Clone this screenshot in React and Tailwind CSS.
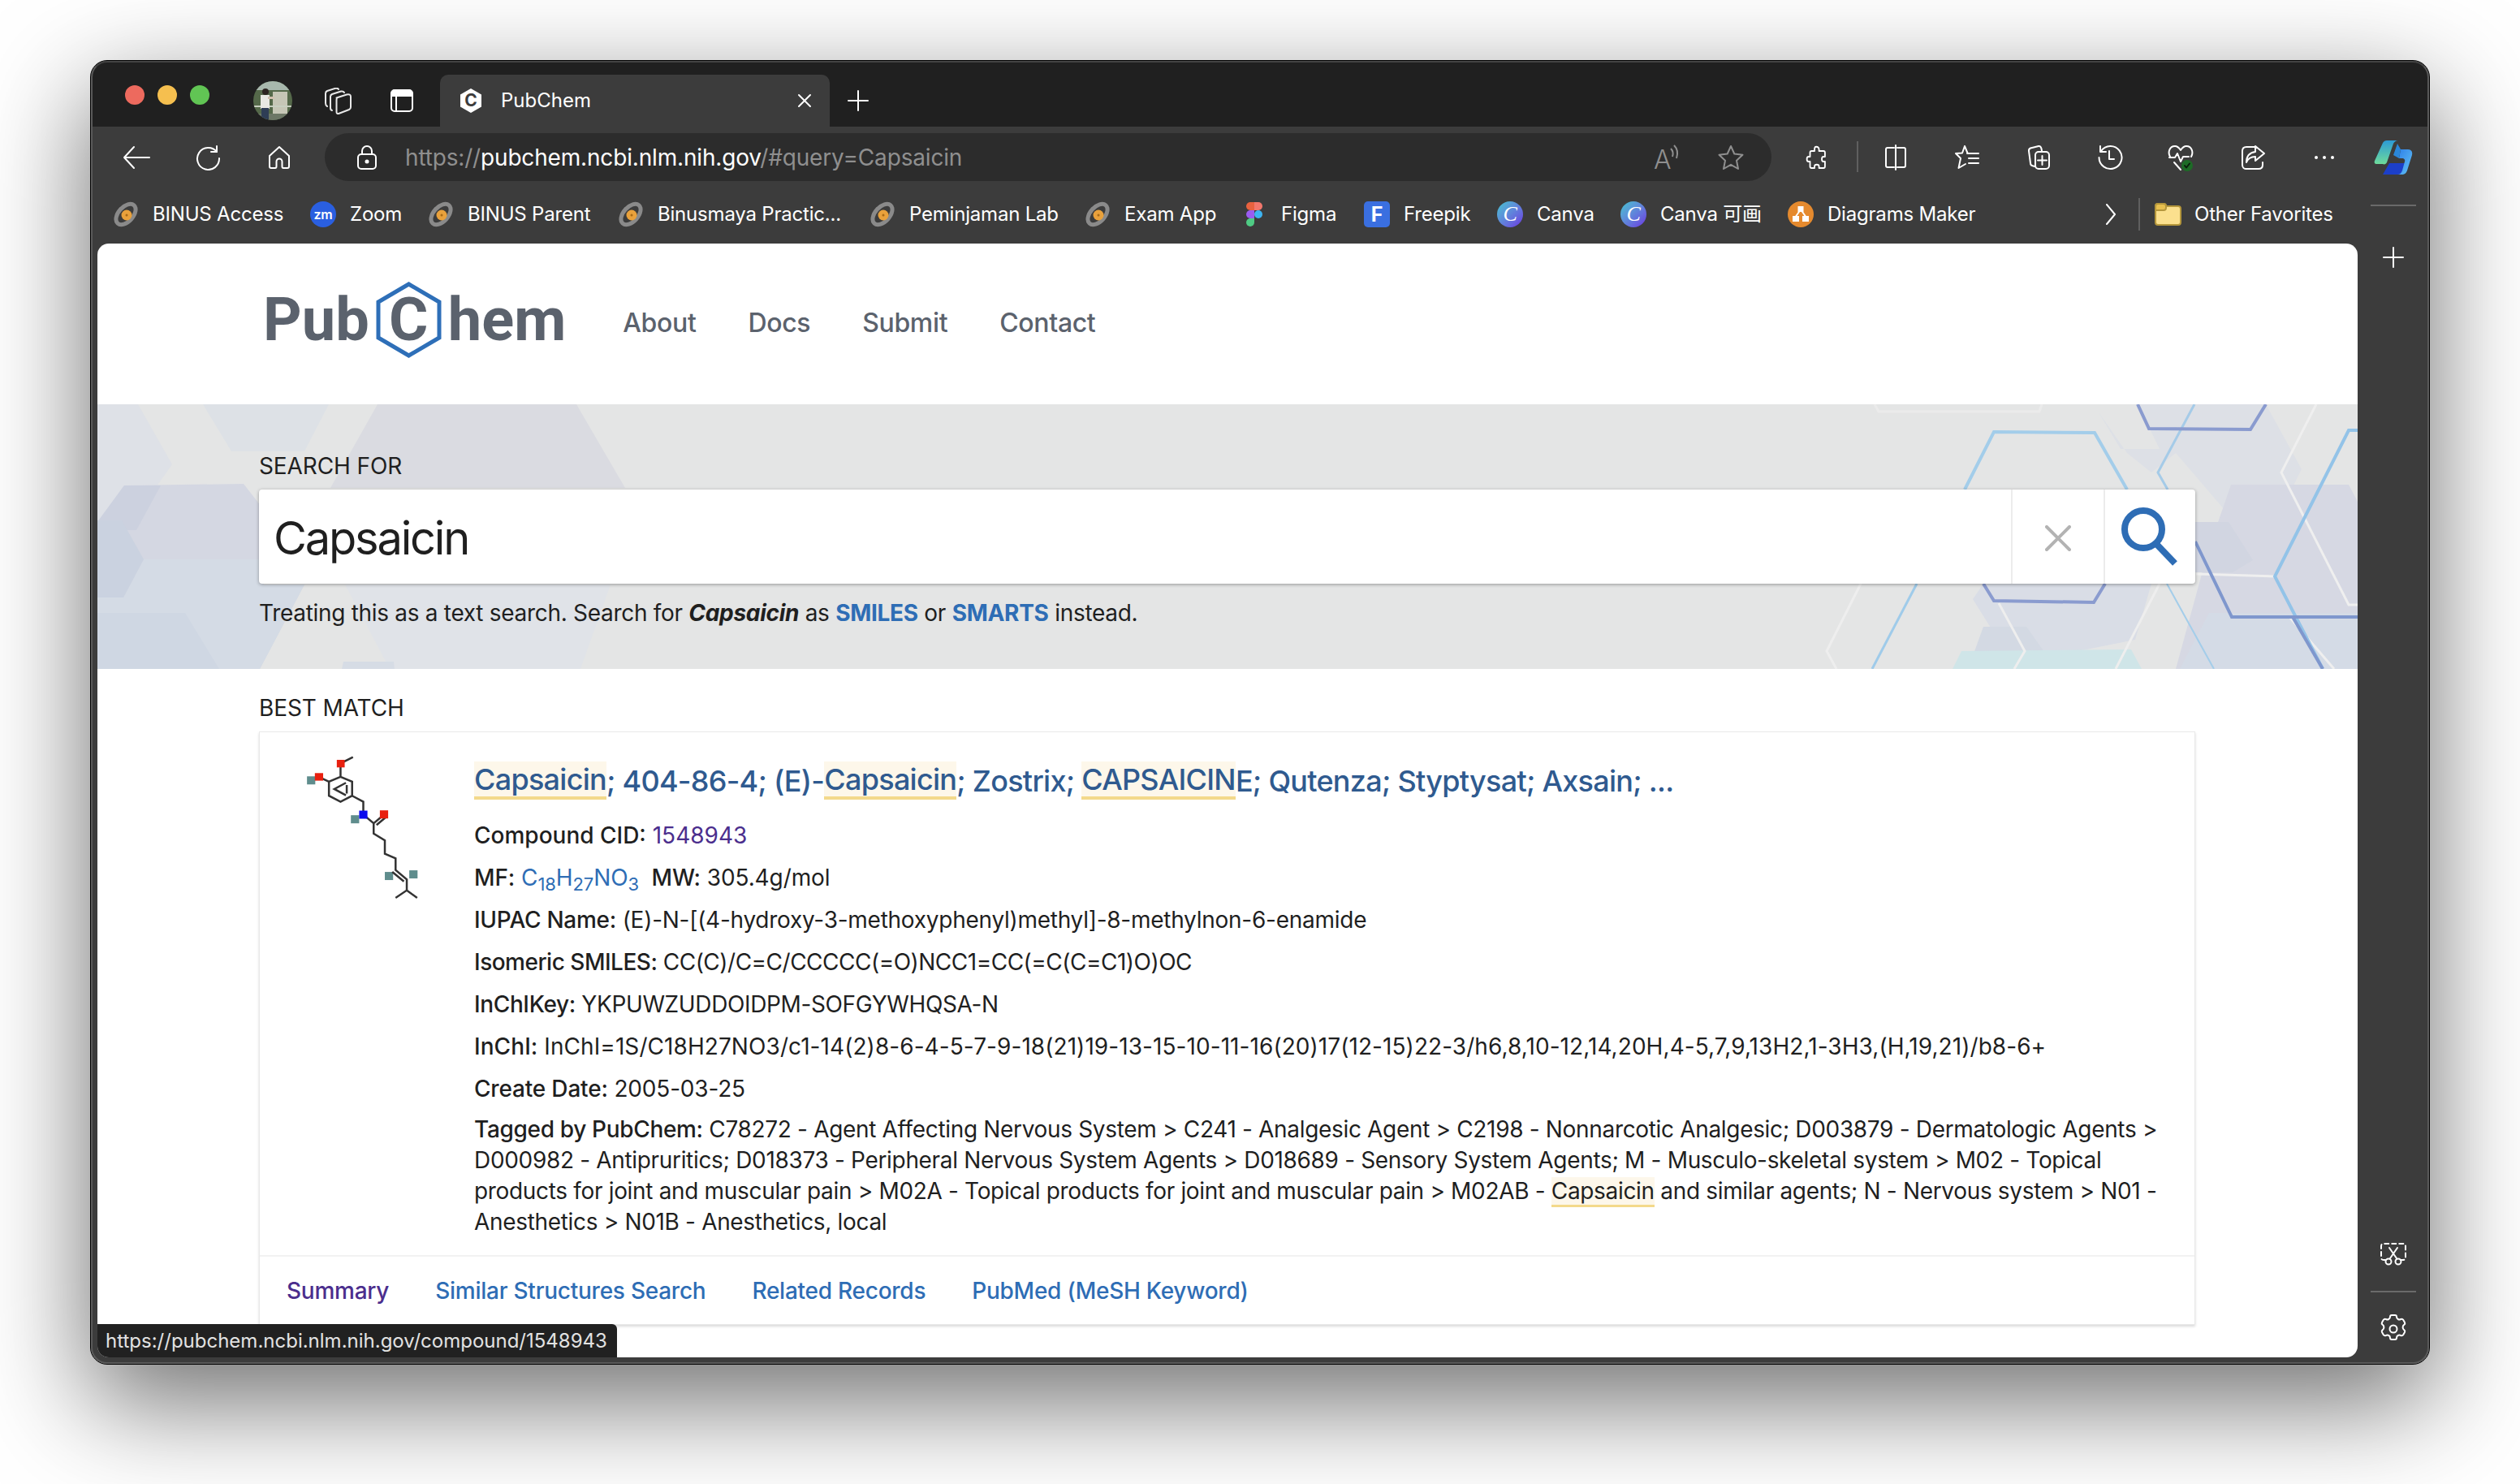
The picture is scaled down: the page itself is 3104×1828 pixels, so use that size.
import React from "react";

const S = ({ w = 32, h = 32, vb, children, className = "", color = "#fff", sw = 2 }) => (
  <svg width={w} height={h} viewBox={vb || `0 0 ${w} ${h}`} fill="none" stroke={color} strokeWidth={sw} strokeLinecap="round" strokeLinejoin="round" className={"shrink-0 " + className}>
    {children}
  </svg>
);

const Binus = () => (
  <svg width="32" height="32" viewBox="0 0 32 32" className="shrink-0">
    <ellipse cx="16" cy="16" rx="15" ry="9" fill="none" stroke="#8a8a8a" strokeWidth="5" transform="rotate(-48 16 16)" />
    <circle cx="17" cy="17" r="6.5" fill="#e9a13b" />
    <circle cx="17" cy="17" r="1.5" fill="#a86a16" />
  </svg>
);
const ZoomIcon = () => (
  <div className="w-[32px] h-[32px] rounded-full bg-[#2a5fe0] flex items-center justify-center text-white text-[16px] font-semibold leading-none shrink-0">zm</div>
);
const Figma = () => (
  <svg width="32" height="32" viewBox="0 0 32 32" className="shrink-0">
    <path d="M11 1h5v10h-5a5 5 0 0 1 0-10z" fill="#e8623f" />
    <path d="M16 1h5a5 5 0 0 1 0 10h-5z" fill="#f2776c" />
    <path d="M11 11h5v10h-5a5 5 0 0 1 0-10z" fill="#9a5cf0" />
    <circle cx="21" cy="16" r="5" fill="#3db4f2" />
    <path d="M11 21h5v5a5 5 0 1 1-5-5z" fill="#4fcb84" />
  </svg>
);
const Freepik = () => (
  <div className="w-[32px] h-[32px] rounded-[5px] bg-[#3a6fe0] flex items-center justify-center text-white text-[25px] font-bold leading-none shrink-0">F</div>
);
const Canva = () => (
  <div className="w-[32px] h-[32px] rounded-full bg-gradient-to-br from-[#3fc4cf] to-[#6a2ce0] flex items-center justify-center text-white text-[26px] italic leading-none shrink-0 [font-family:'Liberation_Serif',serif]">C</div>
);
const Diagrams = () => (
  <svg width="32" height="32" viewBox="0 0 32 32" className="shrink-0">
    <circle cx="16" cy="16" r="16" fill="#e58a2e" />
    <path d="M16 10L9 20M16 10L23 20" stroke="#fff" strokeWidth="2" />
    <rect x="12.5" y="6" width="7" height="7" fill="#fff" />
    <rect x="6" y="18" width="8" height="7" fill="#fff" />
    <rect x="18" y="18" width="8" height="7" fill="#fff" />
  </svg>
);

const favs = [
  { w: "w-[243px]", icon: <Binus />, t: "BINUS Access" },
  { w: "w-[145px]", icon: <ZoomIcon />, t: "Zoom" },
  { w: "w-[234px]", icon: <Binus />, t: "BINUS Parent" },
  { w: "w-[310px]", icon: <Binus />, t: "Binusmaya Practic..." },
  { w: "w-[265px]", icon: <Binus />, t: "Peminjaman Lab" },
  { w: "w-[193px]", icon: <Binus />, t: "Exam App" },
  { w: "w-[151px]", icon: <Figma />, t: "Figma" },
  { w: "w-[164px]", icon: <Freepik />, t: "Freepik" },
  { w: "w-[152px]", icon: <Canva />, t: "Canva" },
  { w: "w-[206px]", icon: <Canva />, t: "Canva 可画" },
  { w: "w-[381px]", icon: <Diagrams />, t: "Diagrams Maker" },
];

const Cell = ({ children }) => <div className="w-[88px] h-[59px] flex items-center justify-center shrink-0">{children}</div>;

const HexBand = () => (
  <svg viewBox="0 0 2784 326" width="2784" height="326" className="absolute inset-0">
    <rect width="2784" height="326" fill="#e4e5e5" />
    <polygon points="0,0 50,0 92,74 68,108 0,145" fill="#dee1e7" />
    <polygon points="33,100 180,98 205,130 205,222 255,222 200,326 0,326 0,145" fill="#d4d7e2" />
    <polygon points="33,100 78,100 48,155 0,155 0,145" fill="#ccd1df" />
    <polygon points="0,238 32,238 57,191 205,191 205,222 255,222 200,326 0,326" fill="#d4dbe5" />
    <polygon points="0,143 30,143 57,191 32,238 0,238" fill="#cad2e0" />
    <polygon points="0,257 108,257 150,326 0,326" fill="#cfd7e3" />
    <polygon points="130,0 165,58 255,58 285,0" fill="#dde1e6" />
    <polygon points="345,0 590,0 650,103 287,103" fill="#dadbe1" />
    <polygon points="305,222 632,222 595,326 360,326" fill="#e0e3e8" />
    <polygon points="303,317 365,317 366,326 301,326" fill="#d6dce5" />
    <polygon points="2465,10 2492,55 2540,55 2513,0 2671,0 2715,80 2690,130 2620,130 2560,60 2530,84 2500,60" fill="#dde0e6" />
    <polygon points="2628,99 2773,99 2784,120 2784,326 2560,326 2600,180" fill="#d6d8e3" />
    <polygon points="2584,145 2625,145 2655,192 2630,207 2584,207" fill="#d1d5e1" />
    <polygon points="2323,221 2530,221 2510,290 2360,320 2310,240" fill="#d9dde6" />
    <polygon points="2323,274 2376,274 2398,305 2310,310" fill="#d3d9e3" />
    <polygon points="2296,304 2505,302 2518,326 2285,326" fill="#cfe5e8" />
    <polygon points="2601,257 2784,257 2784,326 2565,326" fill="#d4dbe6" />
    <g fill="none" strokeWidth="3">
      <path d="M2189 0L2194 9H2392L2395 0" stroke="#ebebeb" />
      <path d="M2733 0L2690 84L2773 247H2784" stroke="#efefef" />
      <path d="M2682 212L2585 209" stroke="#efefef" />
      <path d="M2172 221L2130 304L2142 326" stroke="#eeeeee" />
      <path d="M2342 245L2374 304L2361 326" stroke="#eeeeee" />
      <path d="M2540 221L2486 326" stroke="#eeeeee" />
      <path d="M2700 262L2755 326" stroke="#efefef" />
      <path d="M2300 105L2336 34L2460 35L2500 105" stroke="#a3cdea" strokeWidth="4" />
      <path d="M2241 221L2186 326" stroke="#9fcbea" />
      <path d="M2549 221L2607 326" stroke="#a3cdea" strokeWidth="2" />
      <path d="M2583 0L2538 84L2550 105" stroke="#a5cbe8" />
      <path d="M2784 32H2773L2682 212L2741 326" stroke="#93c3e8" strokeWidth="4" />
      <path d="M2513 0L2527 30L2652 31L2671 0" stroke="#8a9bcf" strokeWidth="4" />
      <path d="M2323 221L2336 242L2459 244L2473 221" stroke="#8a9bcf" strokeWidth="4" />
      <path d="M2584 169L2629 262H2784" stroke="#7f97cd" strokeWidth="4" />
      <path d="M2704 262L2741 326" stroke="#7f97cd" strokeWidth="4" />
    </g>
  </svg>
);

const Molecule = () => (
  <svg viewBox="80 110 300 550" width="153" height="183" preserveAspectRatio="none" className="shrink-0">
    <g fill="#5f8d8d">
      <rect x="94" y="198" width="20" height="30" />
      <rect x="200" y="342" width="20" height="30" />
      <rect x="282" y="552" width="20" height="30" />
      <rect x="341" y="546" width="20" height="30" />
    </g>
    <g fill="none" stroke="#333" strokeWidth="2.5">
      <path vectorEffect="non-scaling-stroke" d="M205 127L175 150V200L203 218V270L175 292L147 270V218L175 200M147 218L122 200M203 270L230 292V340L255 372L280 340M262 378L287 346M255 372V410L282 435V485L308 502V545L335 580V620L308 648M335 620L360 648M300 552L328 587" />
      <path vectorEffect="non-scaling-stroke" d="M188 222L160 245L188 268M190 230V262" />
    </g>
    <g fill="#e8200f">
      <rect x="166" y="137" width="19" height="28" />
      <rect x="113" y="186" width="20" height="28" />
      <rect x="270" y="324" width="20" height="30" />
    </g>
    <rect x="220" y="325" width="20" height="30" fill="#0a0aee" />
  </svg>
);

const Hl = ({ children }) => (
  <span className="bg-[#fdf7ea] border-b-[3px] border-[#f3d98b]">{children}</span>
);
const TitleHl = ({ children }) => (
  <span className="bg-[#fdf7ea] border-b-[4px] border-[#f3d98b] pt-[4px] pb-[3px]">{children}</span>
);
const Row = ({ k, tr = "", children }) => (
  <div className={"h-[52px] leading-[52px] whitespace-pre " + tr}><span className="font-medium">{k}</span> {children}</div>
);
const Sub = ({ children }) => <sub className="text-[22px] leading-none">{children}</sub>;

export default function App() {
  return (
    <div className="w-[3104px] h-[1828px] bg-white overflow-hidden pt-[75px] pl-[112px] [font-family:Inter,'Noto_Sans_CJK_SC',sans-serif]">
      <div className="relative w-[2880px] h-[1605px] rounded-[20px] bg-[#3c3c3c] overflow-hidden outline outline-1 outline-black shadow-[0_44px_130px_4px_rgba(0,0,0,0.56)] flex flex-col">
        {/* title bar */}
        <div className="h-[81px] bg-[#202020] flex items-end shrink-0">
          <div className="h-[64px] pb-[14px] ml-[42px] flex items-center gap-[16px]">
            <div className="w-[24px] h-[24px] rounded-full bg-[#ed6a5e]" />
            <div className="w-[24px] h-[24px] rounded-full bg-[#f5bf4f]" />
            <div className="w-[24px] h-[24px] rounded-full bg-[#61c554]" />
          </div>
          <div className="h-[64px] ml-[54px] flex items-center">
            <svg width="48" height="48" viewBox="0 0 48 48">
              <defs><clipPath id="av"><circle cx="24" cy="24" r="24" /></clipPath></defs>
              <g clipPath="url(#av)">
                <rect width="48" height="48" fill="#55694a" />
                <rect width="48" height="11" fill="#a8b8ad" />
                <rect x="24" y="13" width="18" height="27" fill="#c6c6b6" />
                <rect y="30" width="48" height="2" fill="#c8cfc0" />
                <rect y="40" width="48" height="8" fill="#6d7766" />
                <rect x="9" y="17" width="11" height="17" fill="#e8e8e2" />
                <rect x="18" y="19" width="8" height="3" fill="#cfc0ae" />
                <circle cx="15" cy="13" r="4" fill="#2b2420" />
                <rect x="10" y="33" width="9" height="15" fill="#2e3d55" />
              </g>
            </svg>
          </div>
          <div className="h-[64px] ml-[40px] flex items-center">
            <S w={33} h={33} color="#e8e8e8">
              <path d="M3 23Q1 22 1 19V7Q1 5 3 4L13 .8Q16 .3 17 2" />
              <path d="M9 28Q7 27.500 7 25V11Q7 9 9 8L20 4.500Q23 4 24 6" />
              <path d="M14.500 12.500L27 8.500Q32 7.500 32 11V24Q32 26 30 27L17 32Q14.500 32.500 14.500 29.500V15Q14.500 13 15.500 12.300z" />
            </S>
          </div>
          <div className="h-[64px] ml-[46px] flex items-center">
            <S>
              <rect x="3" y="3" width="26" height="26" rx="4" />
              <path d="M3 9c0-3 2-6 5-6h16c3 0 5 3 5 6v1H3z" fill="#fff" />
              <path d="M9 10v19" />
            </S>
          </div>
          <div className="w-[480px] h-[64px] ml-[31px] bg-[#3c3c3c] rounded-t-[10px] flex items-center text-white text-[24px]">
            <svg width="28" height="32" viewBox="0 0 28 32" className="ml-[24px] shrink-0">
              <polygon points="14,1 27,8.500 27,23.500 14,31 1,23.500 1,8.500" fill="#fff" />
              <text x="14" y="23" textAnchor="middle" fontSize="21" fontWeight="700" fill="#3c3c3c" fontFamily="Inter">C</text>
            </svg>
            <span className="ml-[23px] leading-none">PubChem</span>
            <S w={20} h={20} className="ml-auto mr-[21px]"><path d="M3 3l14 14M17 3L3 17" /></S>
          </div>
          <div className="h-[64px] ml-[19px] flex items-center">
            <S><path d="M16 4v24M4 16h24" /></S>
          </div>
        </div>
        {/* toolbar */}
        <div className="h-[75px] pt-[8px] pl-[12px] flex items-start shrink-0">
          <Cell><S w={36} h={30}><path d="M34 15H3M15 2L3 15l12 13" /></S></Cell>
          <Cell><S><path d="M27 9A13.500 13.500 0 1 0 30 17" /><path d="M27 2v7h-7" /></S></Cell>
          <Cell><S><path d="M16 3L4 14v13c0 1 .8 2 2 2h5c1 0 1.500-.8 1.500-2v-6a3.500 3.500 0 0 1 7 0v6c0 1.200.5 2 1.500 2h5c1.200 0 2-1 2-2V14z" /></S></Cell>
          <div className="w-[1782px] h-[59px] ml-[12px] bg-[#2c2c2c] rounded-full flex items-center pl-[36px] pr-[34px] shrink-0">
            <S><rect x="5" y="12" width="22" height="18" rx="4" /><path d="M10 12V8a6 6 0 0 1 12 0v4" /><circle cx="16" cy="21" r="1.500" fill="#fff" /></S>
            <div className="ml-[31px] text-[28px] tracking-[-0.17px] text-[#8f8f8f] whitespace-pre leading-[34px] shrink-0">https://<span className="text-white">pubchem.ncbi.nlm.nih.gov</span>/#query=Capsaicin</div>
            <svg width="34" height="32" viewBox="0 0 34 32" className="ml-auto shrink-0">
              <text x="0" y="30" fontSize="32" fontWeight="300" fill="#8f8f8f" fontFamily="Inter">A</text>
              <path d="M21 5c3 3 3 7 2 10M25 1c4 4 5 10 3 16" stroke="#8f8f8f" strokeWidth="2" fill="none" />
            </svg>
            <S color="#8f8f8f" className="ml-[45px]"><path d="M16 2l4.300 9.500 10.200 1.200-7.500 7 2 10.300-9-5.200-9 5.200 2-10.300-7.500-7 10.200-1.200z" /></S>
          </div>
          <div className="ml-[12px]"><Cell><S vb="0 0 32 32"><path d="M13 3c3-1 5 1 5 3v2h6c1 0 2 1 2 2v5h-2c-3 0-3 6 0 6h2v6c0 1-1 2-2 2h-6v-2c0-3-6-3-6 0v2H8c-1 0-2-1-2-2v-6H4c-3 0-3-6 0-6h2v-5c0-1 1-2 2-2h4V6c0-1 0-2 1-3z" transform="translate(2 0) scale(.92 1)" /></S></Cell></div>
          <div className="w-[2px] h-[38px] mt-[10px] ml-[5px] bg-[#5f5f5f] shrink-0" />
          <div className="ml-[2px]"><Cell><S><path d="M14 4H6C5 4 4 5 4 6v20c0 1 1 2 2 2h8M18 4h8c1 0 2 1 2 2v20c0 1-1 2-2 2h-8M16 1v30" /></S></Cell></div>
          <Cell><S><path d="M13 2l3.500 8.500M13 2l-3 8.500-8 .5 6 6-2.500 12L14 24M16 11h14M18 17h12M18 23h12" /></S></Cell>
          <Cell><S><path d="M11 27l-3-1c-1-.3-2-1.500-2-3L4 8c-.2-2 1-3 2-3.500L16 2c2-.3 3 1 3.500 3l.5 3" /><rect x="12" y="9" width="17" height="21" rx="4" /><path d="M20.500 14v11M15 19.500h11" /></S></Cell>
          <Cell><S><path d="M5 8A14 14 0 1 1 2.500 16" /><path d="M4 2v7h7" /><path d="M15 8v10h6" /></S></Cell>
          <Cell>
            <svg width="34" height="36" viewBox="0 0 34 36" fill="none" stroke="#fff" strokeWidth="2" strokeLinejoin="round" strokeLinecap="round">
              <path d="M3 17c-3-5-1-13 6-13 3 0 5 2 7 5 2-3 4-5 7-5 7 0 9 8 6 13" />
              <path d="M2 18h7l3-5 4 10 3-6h7" />
              <path d="M8 24l8 9" />
              <circle cx="24" cy="28" r="7" fill="#1d6b26" stroke="none" />
              <path d="M21 28l2 2.500 4-5" stroke="#0a1f0c" />
            </svg>
          </Cell>
          <Cell><S><path d="M18 3H8C5 3 3 5 3 8v17c0 3 2 5 4 5h16c3 0 5-2 5-5v-3" /><path d="M19 2l11 9-11 9v-5c-6 0-9 2-11 7 0-8 4-12 11-13z" /></S></Cell>
          <Cell><S w={28} h={8}><circle cx="4" cy="4" r="2" fill="#fff" stroke="none" /><circle cx="14" cy="4" r="2" fill="#fff" stroke="none" /><circle cx="24" cy="4" r="2" fill="#fff" stroke="none" /></S></Cell>
          <Cell>
            <svg width="50" height="42" viewBox="0 0 50 42" className="-ml-[6px]">
              <defs>
                <linearGradient id="cp1" x1="0" x2="0" y1="0" y2="1"><stop offset="0" stopColor="#2c9ad6" /><stop offset="1" stopColor="#6fdc9a" /></linearGradient>
                <linearGradient id="cp2" x1="0" x2="1" y1="0" y2="1"><stop offset="0" stopColor="#2d7fe8" /><stop offset="1" stopColor="#63c3f5" /></linearGradient>
              </defs>
              <path d="M20 28L12 42h18c4 0 6-1 7-5l3-9z" fill="#1c3fc8" />
              <path d="M12 3c1-2 3-3 5-3h14c-3 0-5 2-6 4L17 27c-1 2-3 3-5 2H4c-2 0-3-2-2-4z" fill="url(#cp1)" />
              <path d="M34 11h9c4 0 6 3 5 7l-6 19c-1 3-3 5-7 5h-5c3 0 5-2 6-5l3-11c1-2-1-4-3-4l-4 0z" fill="url(#cp2)" />
              <path d="M30 4l4 7-2 11-7-4z" fill="#2a86d8" />
            </svg>
          </Cell>
        </div>
        {/* favorites */}
        <div className="h-[69px] pb-[3px] pl-[27px] flex items-center shrink-0 text-white text-[24px] tracking-[-0.2px] leading-none">
          {favs.map((f) => (
            <div key={f.t} className={f.w + " flex items-center shrink-0 whitespace-nowrap"}>
              {f.icon}
              <span className="ml-[17px]">{f.t}</span>
            </div>
          ))}
          <S w={16} h={28} className="ml-[9px]"><path d="M3 2l10 12L3 26" /></S>
          <div className="w-[2px] h-[40px] ml-[26px] bg-[#5f5f5f] shrink-0" />
          <svg width="34" height="30" viewBox="0 0 34 30" className="ml-[17px] shrink-0">
            <path d="M2 5c0-2 1-3 3-3h7c2 0 3 1 3 3h15c2 0 3 1 3 3v17c0 2-1 3-3 3H5c-2 0-3-1-3-3z" fill="#fbe08e" stroke="#b5973c" strokeWidth="2" />
            <path d="M2 5c0-2 1-3 3-3h7c2 0 3 1 3 3v2c0 2-1 3-3 3H2z" fill="#e8c04f" stroke="#b5973c" strokeWidth="2" />
          </svg>
          <span className="ml-[16px] whitespace-nowrap">Other Favorites</span>
          <div className="w-[56px] h-[2px] ml-auto mr-[16px] mt-[-22px] bg-[#6a6a6a] shrink-0" />
        </div>
        {/* body */}
        <div className="flex flex-1 min-h-0 pl-[8px] pb-[8px]">
          <div className="relative w-[2784px] h-full bg-white rounded-[14px] overflow-hidden shrink-0 text-[#1f1f1f] text-[28px]">
            <div className="h-[198px] pl-[204px] flex items-center">
              <div className="flex items-center mb-[10px] text-[#5b626d] text-[74px] font-bold leading-none [font-family:Roboto,sans-serif]">
                <span>Pub</span>
                <div className="relative w-[81px] h-[94px] ml-[8px] flex items-center justify-center">
                  <svg viewBox="0 0 81 94" width="81" height="94" className="absolute inset-0">
                    <polygon points="40.500,3 78,25 78,69 40.500,91 3,69 3,25" fill="none" stroke="#2e6fb8" strokeWidth="5" />
                  </svg>
                  <span className="relative">C</span>
                </div>
                <span className="ml-[8px]">hem</span>
              </div>
              <nav className="flex items-center gap-[64px] ml-[70px] mb-[3px] text-[#5b626d] text-[32px] tracking-[-0.35px] font-medium leading-none">
                <span>About</span><span>Docs</span><span>Submit</span><span>Contact</span>
              </nav>
            </div>
            <div className="relative h-[326px]">
              <HexBand />
              <div className="relative pl-[199px]">
                <div className="h-[105px] pb-[15px] flex items-end leading-none pt-[60px] tracking-[-0.1px]">SEARCH FOR</div>
                <div className="w-[2385px] h-[116px] bg-white rounded-[4px] shadow-[0_1px_4px_rgba(0,0,0,0.35)] flex items-stretch">
                  <div className="flex-1 pl-[18px] pt-[3px] flex items-center text-[56px] tracking-[-2.2px] leading-none">Capsaicin</div>
                  <div className="w-[114px] pt-[4px] border-l-2 border-[#ececec] flex items-center justify-center">
                    <S w={32} h={32} color="#b3b3b3" sw={4}><path d="M2 2l28 28M30 2L2 30" /></S>
                  </div>
                  <div className="w-[113px] pr-[4px] pb-[3px] border-l-2 border-[#ececec] flex items-center justify-center">
                    <svg width="76" height="76" viewBox="0 0 76 76" fill="none" stroke="#2e6db5" className="shrink-0">
                      <circle cx="31" cy="30" r="23" strokeWidth="8" />
                      <path d="M48 49L70 72" strokeWidth="8" />
                    </svg>
                  </div>
                </div>
                <div className="mt-[22px] leading-none whitespace-pre tracking-[-0.3px]">Treating this as a text search. Search for <b className="italic">Capsaicin</b> as <b className="text-[#2e6db5] font-bold">SMILES</b> or <b className="text-[#2e6db5] font-bold">SMARTS</b> instead.</div>
              </div>
            </div>
            <div className="pl-[199px]">
              <div className="h-[77px] pt-[34px] leading-none tracking-[-0.1px]">BEST MATCH</div>
              <div className="w-[2385px] h-[731px] border border-[#e9e9e9] shadow-[0_2px_3px_rgba(0,0,0,0.15)] flex flex-col">
                <div className="flex flex-1">
                  <div className="w-[264px] pl-[51px] pt-[25px] shrink-0"><Molecule /></div>
                  <div className="pt-[36px]">
                    <div className="h-[47px] mb-[18px] flex items-center whitespace-pre text-[36px] font-medium tracking-[-0.72px] text-[#2f5a8f] leading-none">
                      <TitleHl>Capsaicin</TitleHl><span>; 404-86-4; (E)-</span><TitleHl>Capsaicin</TitleHl><span>; Zostrix; </span><TitleHl>CAPSAICIN</TitleHl><span>E; Qutenza; Styptysat; Axsain; ...</span>
                    </div>
                    <Row k="Compound CID:"><span className="text-[#4b2e8d]">1548943</span></Row>
                    <Row k="MF:" tr="tracking-[-0.1px]"><span className="text-[#2e6db5]">C<Sub>18</Sub>H<Sub>27</Sub>NO<Sub>3</Sub></span>{"  "}<span className="font-medium">MW:</span> 305.4g/mol</Row>
                    <Row k="IUPAC Name:" tr="tracking-[-0.26px]">(E)-N-[(4-hydroxy-3-methoxyphenyl)methyl]-8-methylnon-6-enamide</Row>
                    <Row k="Isomeric SMILES:" tr="tracking-[-0.5px]">CC(C)/C=C/CCCCC(=O)NCC1=CC(=C(C=C1)O)OC</Row>
                    <Row k="InChIKey:" tr="tracking-[-0.37px]">YKPUWZUDDOIDPM-SOFGYWHQSA-N</Row>
                    <Row k="InChI:" tr="tracking-[0.07px]">InChI=1S/C18H27NO3/c1-14(2)8-6-4-5-7-9-18(21)19-13-15-10-11-16(20)17(12-15)22-3/h6,8,10-12,14,20H,4-5,7,9,13H2,1-3H3,(H,19,21)/b8-6+</Row>
                    <Row k="Create Date:" tr="tracking-[-0.18px]">2005-03-25</Row>
                    <div className="mt-[5px] leading-[38px] whitespace-nowrap tracking-[-0.33px]">
                      <span className="font-medium">Tagged by PubChem:</span> C78272 - Agent Affecting Nervous System &gt; C241 - Analgesic Agent &gt; C2198 - Nonnarcotic Analgesic; D003879 - Dermatologic Agents &gt;<br />
                      D000982 - Antipruritics; D018373 - Peripheral Nervous System Agents &gt; D018689 - Sensory System Agents; M - Musculo-skeletal system &gt; M02 - Topical<br />
                      products for joint and muscular pain &gt; M02A - Topical products for joint and muscular pain &gt; M02AB - <Hl>Capsaicin</Hl> and similar agents; N - Nervous system &gt; N01 -<br />
                      Anesthetics &gt; N01B - Anesthetics, local
                    </div>
                  </div>
                </div>
                <div className="h-[85px] border-t-2 border-[#f2f2f2] pl-[33px] flex items-center gap-[57px] font-medium text-[#2e6db5] tracking-[-0.25px] shrink-0 leading-none">
                  <span className="text-[#4b2e8d]">Summary</span>
                  <span>Similar Structures Search</span>
                  <span>Related Records</span>
                  <span>PubMed (MeSH Keyword)</span>
                </div>
              </div>
            </div>
            <div className="absolute left-0 bottom-0 w-[640px] h-[41px] bg-[#212121] rounded-tr-[6px] pl-[10px] flex items-center text-[#e2e2e2] text-[24px] leading-none whitespace-nowrap">https://pubchem.ncbi.nlm.nih.gov/compound/1548943</div>
          </div>
          <div className="w-[88px] flex flex-col items-center shrink-0">
            <S className="mt-[1px]"><path d="M16 4v24M4 16h24" /></S>
            <svg width="34" height="30" viewBox="0 0 34 30" fill="none" stroke="#fff" strokeWidth="2" className="mt-auto shrink-0" strokeLinecap="round">
              <path d="M2 8V5c0-2 1-3 3-3h24c2 0 3 1 3 3v14c0 2-1 3-3 3h-3M2 12v7c0 2 1 3 3 3h3" strokeDasharray="5 4" />
              <path d="M12 7l9 13M22 7l-9 13" />
              <circle cx="11" cy="24" r="3.500" /><circle cx="23" cy="24" r="3.500" />
            </svg>
            <div className="w-[56px] h-[2px] mt-[30px] bg-[#6a6a6a] shrink-0" />
            <svg width="34" height="36" viewBox="0 0 34 36" fill="none" stroke="#fff" strokeWidth="2" strokeLinejoin="round" className="mt-[27px] mb-[17px] shrink-0">
              <path d="M13 3c0-1 1-2 2-2h4c1 0 2 1 2 2 0 3 3 4 5 3 1-.6 2-.4 3 .6l2 3.400c.5 1 .2 2-.6 2.600-2.400 1.500-2.400 5 0 6.800.8.600 1.100 1.600.6 2.600l-2 3.400c-1 1-2 1.200-3 .6-2-1-5 0-5 3 0 1-1 2-2 2h-4c-1 0-2-1-2-2 0-3-3-4-5-3-1 .6-2 .4-3-.6l-2-3.400c-.5-1-.2-2 .6-2.600 2.400-1.800 2.400-5.300 0-6.800-.8-.6-1.100-1.600-.6-2.600l2-3.400c1-1 2-1.200 3-.6 2 1 5 0 5-3z" />
              <circle cx="17" cy="18" r="4.500" />
            </svg>
          </div>
        </div>
        <div className="absolute inset-0 rounded-[20px] border-[2px] border-[#5a5a5a] border-t-[#444] pointer-events-none" />
      </div>
    </div>
  );
}
